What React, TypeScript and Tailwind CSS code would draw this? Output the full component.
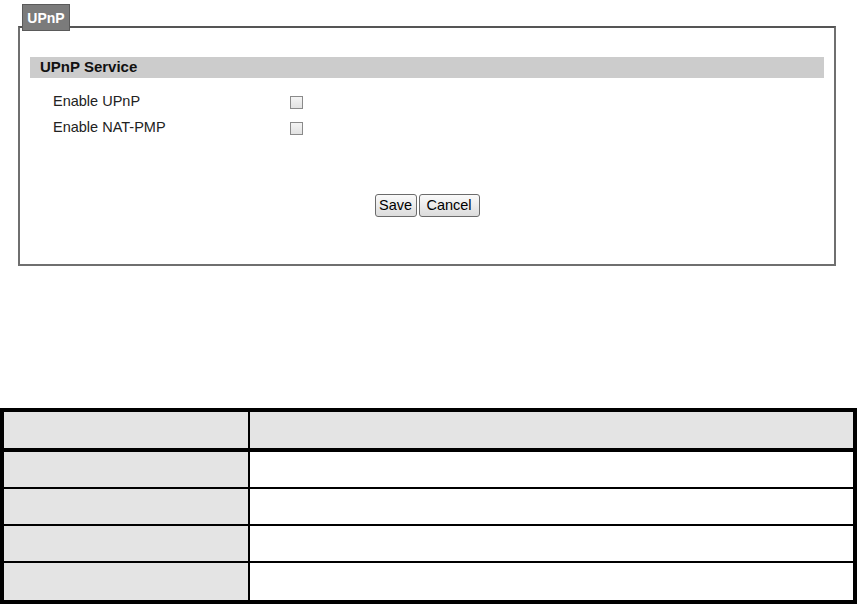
import React from "react";

const rows = [0, 1, 2, 3];

const Checkbox: React.FC = () => (
  <span className="block w-[13px] h-[13px] border border-[#8a8a8a] bg-gradient-to-b from-[#f4f4f4] to-[#e2e2e2]" />
);

const App: React.FC = () => {
  return (
    <div className="w-[857px] h-[604px] bg-white font-['Liberation_Sans',Arial,sans-serif] text-[14.5px] text-[#222] overflow-hidden">
      {/* UPnP panel */}
      <div className="pt-[4px]">
        <div className="relative z-10 ml-[22px] w-[48px] h-[27px] bg-[#7b7b7b] border border-[#5a5a5a] flex items-center justify-center">
          <span className="text-white font-bold text-[14px] leading-none">UPnP</span>
        </div>
        <div className="-mt-[5px] ml-[18px] w-[818px] h-[240px] border-2 border-[#6f6f6f] border-t-[#555] pt-[29px] px-[10px]">
          <div className="h-[21px] bg-[#cccccc] flex items-center pl-[10px]">
            <span className="font-bold text-[15px] text-[#111]">UPnP Service</span>
          </div>
          <div className="mt-[11px] pl-[23px]">
            <div className="h-[26px] flex items-center">
              <span className="w-[237px]">Enable UPnP</span>
              <Checkbox />
            </div>
            <div className="h-[26px] flex items-center">
              <span className="w-[237px]">Enable NAT-PMP</span>
              <Checkbox />
            </div>
          </div>
          <div className="mt-[53px] flex justify-center gap-[2px]">
            <button className="w-[42px] h-[23px] border border-[#6b6b6b] rounded-[3px] bg-gradient-to-b from-[#fafafa] to-[#dcdcdc] text-[14.5px] text-black">
              Save
            </button>
            <button className="w-[61px] h-[23px] border border-[#6b6b6b] rounded-[3px] bg-gradient-to-b from-[#fafafa] to-[#dcdcdc] text-[14.5px] text-black">
              Cancel
            </button>
          </div>
        </div>
      </div>

      {/* table */}
      <div className="mt-[142px] border-4 border-black w-[857px]">
        <div className="flex h-[36px] bg-[#e4e4e4]">
          <div className="w-[246px] border-r-2 border-black" />
          <div className="flex-1" />
        </div>
        <div className="h-[4px] bg-black" />
        {rows.map((r) => (
          <div key={r} className={`flex h-[37px] ${r < 3 ? "border-b-2 border-black" : ""}`}>
            <div className="w-[246px] bg-[#e4e4e4] border-r-2 border-black" />
            <div className="flex-1 bg-white" />
          </div>
        ))}
      </div>
    </div>
  );
};

export default App;
